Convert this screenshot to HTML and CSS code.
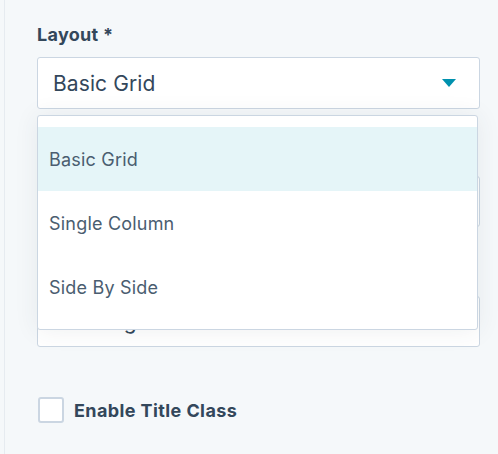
FILE: index.html
```html
<!DOCTYPE html>
<html>
<head>
<meta charset="utf-8">
<link rel="stylesheet" href="styles.css">
</head>
<body>
<div class="panel">
  <div class="field">
    <div class="label">Layout *</div>
    <div class="select-wrap">
      <div class="select">
        <span class="value">Basic Grid</span>
        <svg class="caret" width="14" height="8" viewBox="0 0 14 8"><path d="M0 0 L14 0 L7 8 Z" fill="#0091ae"/></svg>
      </div>
      <ul class="menu">
        <li class="item active">Basic Grid</li>
        <li class="item">Single Column</li>
        <li class="item">Side By Side</li>
      </ul>
    </div>
  </div>
  <div class="input input-a"></div>
  <div class="input input-b"><span class="value">Heading</span></div>
  <label class="check">
    <span class="box"></span>
    <span class="check-label">Enable Title Class</span>
  </label>
</div>
</body>
</html>
```
FILE: styles.css
```css
html, body {
  margin: 0;
  padding: 0;
  background: #f5f8fa;
  font-family: Inter, "Noto Sans", sans-serif;
  color: #33475b;
}
.panel {
  margin-left: 4px;
  border-left: 1px solid #e6ebf0;
  height: 454px;
  box-sizing: border-box;
  padding: 24px 18px 0 32px;
  display: flex;
  flex-direction: column;
}
.label {
  font-size: 18px;
  font-weight: 700;
  letter-spacing: 0.3px;
  line-height: 22px;
  height: 33px;
}
.select-wrap {
  position: relative;
}
.select {
  height: 52px;
  box-sizing: border-box;
  background: #fff;
  border: 1px solid #cbd6e2;
  border-radius: 3px;
  display: flex;
  align-items: center;
  justify-content: space-between;
  padding: 0 23px 0 15px;
}
.value {
  font-size: 21px;
  letter-spacing: 0.1px;
}
.menu {
  position: absolute;
  top: 58px;
  left: 0;
  right: 2px;
  margin: 0;
  padding: 11px 0 10px;
  list-style: none;
  background: #fff;
  border: 1px solid #cbd6e2;
  border-radius: 3px;
  box-shadow: 0 1px 24px rgba(45, 62, 80, 0.08);
  z-index: 2;
}
.item {
  height: 64px;
  display: flex;
  align-items: center;
  padding-left: 11px;
  font-size: 18px;
  letter-spacing: 0.2px;
  color: #4a5d70;
}
.item.active {
  background: #e5f5f8;
}
.input {
  height: 51px;
  box-sizing: border-box;
  background: #fff;
  border: 1px solid #cbd6e2;
  border-radius: 3px;
  display: flex;
  align-items: center;
  padding-left: 15px;
}
.input-a { margin-top: 67px; }
.input-b { margin-top: 69px; }
.check {
  margin-top: 50px;
  display: flex;
  align-items: center;
  gap: 10px;
  padding-left: 1px;
}
.box {
  width: 26px;
  height: 26px;
  box-sizing: border-box;
  border: 2px solid #cbd6e2;
  border-radius: 3px;
  background: #fff;
}
.check-label {
  font-size: 18px;
  font-weight: 700;
  letter-spacing: 0.4px;
}
```
